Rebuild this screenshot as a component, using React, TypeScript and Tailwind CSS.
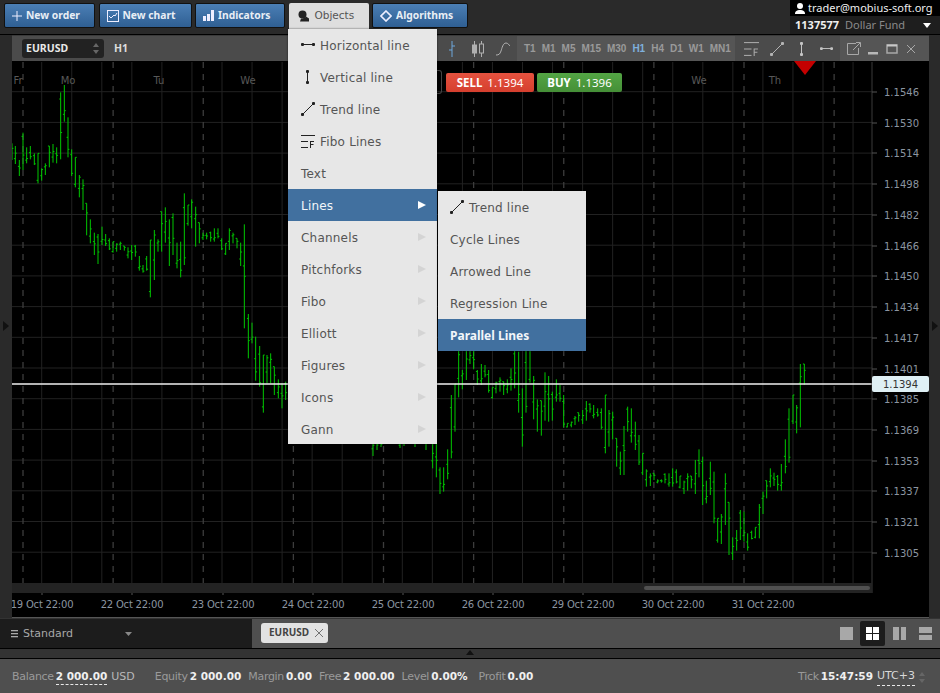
import React from "react";

const blockA: number[][] = [[36,250,300],[46,258,312],[58,300,348],[69,218,330],[80,262,310],[91,258,298],[103,280,315],[114,280,370],[125,325,362],[136,310,345],[148,258,322],[159,252,308],[170,262,310],[182,97,298],[193,75,185],[204,172,292],[215,268,348],[226,292,382],[238,345,412],[249,358,450],[260,430,526],[271,478,550],[283,518,585],[294,522,612],[306,500,555],[317,522,558],[328,535,570],[339,545,578],[350,550,575],[361,545,570],[373,558,572],[384,562,595],[395,555,600],[406,555,590],[418,588,632],[429,615,638],[440,588,632],[451,540,712],[463,510,660],[474,538,575],[485,455,575],[496,442,548],[508,478,618],[519,460,585],[531,548,625],[542,545,652],[553,400,615],[564,435,497],[575,418,505],[587,440,560],[598,488,550],[609,518,540],[620,518,538],[632,515,545],[643,505,545],[654,505,535],[665,535,570],[677,550,585],[688,505,570],[699,518,550],[711,535,565],[722,548,618],[733,493,805],[745,762,895],[756,788,850],[767,830,962],[779,858,980],[790,885,1058],[801,885,970],[812,880,970],[823,920,1005],[835,958,1015],[846,970,1045],[857,965,1020]];
const blockB: number[][] = [[8,310,385],[19,310,412],[30,382,462],[41,382,455],[53,328,418],[64,165,355],[75,132,275],[86,30,172],[97,90,148],[109,30,120],[120,30,72],[131,30,88],[142,90,135],[154,72,135],[165,75,112],[176,90,158],[187,142,176],[198,125,160],[210,112,155],[221,125,165],[232,118,160],[243,85,152],[254,30,145],[266,35,218],[277,145,320],[288,30,218],[300,30,128],[311,108,238],[322,178,275],[334,182,287],[345,97,242],[356,108,245],[367,155,242],[379,118,185],[390,135,185],[401,165,262],[412,250,262],[424,245,262],[435,228,255],[446,218,245],[458,210,252],[469,183,242],[480,190,218],[491,195,235],[503,205,230],[514,205,268],[526,165,340],[537,210,320],[548,215,298],[560,295,380],[571,335,405],[582,258,405],[593,200,275],[604,205,308],[616,245,330],[627,285,375],[638,340,405],[649,388,440],[661,400,438],[672,400,420],[683,418,430],[694,418,428],[705,400,430],[717,400,440],[728,385,440],[739,388,430],[750,408,445],[762,422,462],[773,400,452],[784,408,445],[796,360,462],[807,328,412],[818,350,495],[829,422,490],[841,365,465],[852,395,550],[863,535,608],[874,522,612],[886,400,555],[897,487,645],[908,592,660],[920,570,632],[931,510,600],[942,515,605],[953,580,632],[965,572,598],[976,562,595],[988,492,595],[999,455,522],[1010,422,475],[1021,385,442],[1032,398,438],[1043,405,452],[1054,372,452],[1066,298,400],[1077,205,368],[1089,165,252],[1100,195,280],[1111,72,262],[1123,72,135]];
const hidden: number[][] = [[373,420,456],[377,425,450],[381,420,447],[400,420,448],[404,420,446],[415,420,447],[426,420,450]];

const bars: number[][] = [
  ...blockA.map(([x, t, b]) => [x / 3, 60 + t / 3, 60 + b / 3]),
  ...hidden,
  ...blockB.map(([x, t, b]) => [430 + x / 3, 340 + t / 3, 340 + b / 3]),
];

const priceLabels: [string, number][] = [["1.1546",92],["1.1530",123],["1.1514",153],["1.1498",184],["1.1482",215],["1.1466",246],["1.1450",276],["1.1434",307],["1.1417",338],["1.1401",369],["1.1385",399],["1.1369",430],["1.1353",461],["1.1337",491],["1.1321",522],["1.1305",553]];
const timeLabels: [string, number][] = [["19 Oct 22:00",42],["22 Oct 22:00",132],["23 Oct 22:00",223],["24 Oct 22:00",313],["25 Oct 22:00",403],["26 Oct 22:00",493],["29 Oct 22:00",583],["30 Oct 22:00",673],["31 Oct 22:00",763]];
const dayLabels: [string, number][] = [["Fr",18],["Mo",68],["Tu",159],["We",248],["We",699],["Th",775]];

const Chart = () => {
  const vs = Array.from({ length: 28 }, (_, i) => 41.7 + i * 30.05);
  const hs = Array.from({ length: 16 }, (_, i) => 91.7 + i * 30.7);
  const ds = Array.from({ length: 10 }, (_, i) => 23 + i * 90.125);
  return (
    <svg viewBox="12 61 917 557" className="block w-[917px] h-[557px] bg-black" style={{ fontFamily: "'DejaVu Sans', sans-serif" }}>
      {vs.map((x) => <line key={x} x1={x} x2={x} y1={62} y2={583} stroke="#222222" />)}
      {hs.map((y) => <line key={y} x1={12} x2={872} y1={y} y2={y} stroke="#222222" />)}
      {ds.map((x) => <line key={x} x1={x} x2={x} y1={62} y2={583} stroke="#3c3c3c" strokeWidth={1.3} strokeDasharray="6 6" />)}
      {bars.map(([x, t, b], i) => {
        const h = b - t;
        const o = t + h * (((i * 37) % 10) / 10);
        const c = t + h * (((i * 61 + 3) % 10) / 10);
        return (
          <g key={i} stroke="#00c800" strokeWidth={1}>
            <line x1={x} x2={x} y1={t} y2={b} />
            <line x1={x - 1.4} x2={x} y1={o} y2={o} />
            <line x1={x} x2={x + 1.4} y1={c} y2={c} />
          </g>
        );
      })}
      <line x1={12} x2={872} y1={384} y2={384} stroke="#f0f0f0" strokeWidth={1.4} />
      <line x1={872} x2={872} y1={62} y2={593} stroke="#3a3a3a" />
      <rect x={12} y={583} width={860} height={10} fill="#232323" />
      <rect x={644} y={586} width={226} height={4} rx={2} fill="#505050" />
      {priceLabels.map(([t, y]) => (
        <g key={t}>
          <line x1={872} x2={877} y1={y} y2={y} stroke="#555" />
          <text x={884} y={y + 4} fontSize={10} fill="#8b95a0">{t}</text>
        </g>
      ))}
      {timeLabels.map(([t, x]) => (
        <g key={t}>
          <line x1={x} x2={x} y1={593} y2={595} stroke="#555" />
          <text x={x} y={608} fontSize={10} letterSpacing={-0.22} fill="#8b95a0" textAnchor="middle">{t}</text>
        </g>
      ))}
      {dayLabels.map(([t, x], i) => (
        <text key={i} x={x} y={84} fontSize={10} fill="#585858" textAnchor="middle">{t}</text>
      ))}
      <polygon points="794,61 816,61 805,75" fill="#c40000" />
      <line x1={12} x2={929} y1={617.5} y2={617.5} stroke="#555" />
    </svg>
  );
};

const TopButton = ({ icon, label, w }: { icon: React.ReactNode; label: string; w: string }) => (
  <button className={`${w} h-[25px] flex items-center justify-start pl-[7px] gap-[4px] rounded-[2px] border border-[#111] bg-gradient-to-b from-[#4b7fb5] to-[#2f5f93] font-['Noto_Sans',sans-serif] text-[10.3px] font-bold text-[#e8eef5]`}>
    {icon}
    <span>{label}</span>
  </button>
);

const HLineIcon = () => (
  <svg width="14" height="6" viewBox="0 0 14 6" fill="#222"><rect x="0" y="1" width="3" height="3" rx="1" /><rect x="11" y="1" width="3" height="3" rx="1" /><rect x="2" y="2" width="10" height="1" /></svg>
);
const VLineIcon = () => (
  <svg width="6" height="14" viewBox="0 0 6 14" fill="#222"><rect x="1" y="0" width="3" height="3" rx="1" /><rect x="1" y="11" width="3" height="3" rx="1" /><rect x="2" y="2" width="1" height="10" /></svg>
);
const TrendIcon = ({ c = "#222" }: { c?: string }) => (
  <svg width="14" height="14" viewBox="0 0 14 14" fill={c}><rect x="0" y="11" width="3" height="3" rx="1" /><rect x="11" y="0" width="3" height="3" rx="1" /><line x1="2" y1="12" x2="12" y2="2" stroke={c} /></svg>
);
const FiboIcon = ({ c = "#222" }: { c?: string }) => (
  <svg width="14" height="13" viewBox="0 0 14 13" fill={c}><rect x="0" y="0" width="14" height="1" /><rect x="0" y="6" width="7" height="1" /><rect x="0" y="12" width="7" height="1" /><path d="M9 6h4v1h-3v2h2.5v1H10v3H9z" /></svg>
);
const Caret = ({ active }: { active: boolean }) => (
  <svg width="8" height="8" viewBox="0 0 8 8" className="ml-auto"><polygon points="0,0 8,4 0,8" fill={active ? "#ffffff" : "#d4d4d4"} /></svg>
);

const MenuItem = ({ label, icon, active, caret, iconW = "w-[19px]" }: { label: string; icon?: React.ReactNode; active?: boolean; caret?: boolean; iconW?: string }) => (
  <div className={`h-[32px] flex items-center pl-[13px] pr-[11px] text-[12px] tracking-[0.2px] ${active ? "bg-[#41709f] text-[#f2f6fa]" : "text-[#555555]"}`}>
    {icon && <span className={`${iconW} flex items-center justify-start shrink-0`}>{icon}</span>}
    <span className="pt-[1px]">{label}</span>
    {caret && <Caret active={!!active} />}
  </div>
);

const Tf = ({ t, on }: { t: string; on?: boolean }) => (
  <span className={on ? "text-[#7fb0dc]" : "text-[#9a9a9a]"}>{t}</span>
);

const ToolIcon = ({ children, w = 14, h = 14 }: { children: React.ReactNode; w?: number; h?: number }) => (
  <svg width={w} height={h} viewBox={`0 0 ${w} ${h}`} fill="none" stroke="#a8a8a8">{children}</svg>
);

const Toolbar = () => (
  <div className="h-[26px] flex items-stretch bg-[#4b4b4b] border-t border-[#3a3a3a]">
    <div className="w-[505px] flex items-center pl-[10px]">
      <div className="w-[82px] h-[19px] rounded-[3px] bg-[#222222] flex items-center pl-[4px] pr-[5px] font-['Noto_Sans',sans-serif] text-[10.5px] font-bold text-[#e8e8e8]">
        <span>EURUSD</span>
        <svg width="6" height="11" viewBox="0 0 6 11" className="ml-auto" fill="#666"><polygon points="3,0 6,4 0,4" /><polygon points="0,7 6,7 3,11" /></svg>
      </div>
      <span className="ml-[10px] font-['Noto_Sans',sans-serif] text-[10.5px] font-bold text-[#dddddd]">H1</span>
      <div className="ml-auto flex items-center pr-[7px]">
        <svg width="8" height="16" viewBox="0 0 8 16" stroke="#6fa8dc" fill="none"><path d="M4 0v16M1 9h3M4 5h3" /></svg>
        <svg width="14" height="16" viewBox="0 0 14 16" stroke="#b0b0b0" fill="none" className="ml-[15px]"><path d="M3.5 0v16M10.5 0v16" /><rect x="1.5" y="4" width="4" height="8" fill="#b0b0b0" /><rect x="8.5" y="3" width="4" height="9" fill="#4b4b4b" /></svg>
        <svg width="14" height="14" viewBox="0 0 14 14" stroke="#b0b0b0" fill="none" className="ml-[11px]"><path d="M0 13c3 0 4-1 5-4s2-8 5-8c2 0 3 2 4 3" /></svg>
      </div>
    </div>
    <div className="w-[218px] bg-[#555555] flex items-center pl-[7px] gap-[6px] font-['Liberation_Sans',sans-serif] text-[10px] font-bold">
      {["T1","M1","M5","M15","M30"].map((t) => <Tf key={t} t={t} />)}
      <Tf t="H1" on />
      {["H4","D1","W1","MN1"].map((t) => <Tf key={t} t={t} />)}
    </div>
    <div className="w-[105px] flex items-center pl-[9px] gap-[11px]">
      <svg width="15" height="14" viewBox="0 0 14 13" fill="#a8a8a8"><rect x="0" y="0" width="14" height="1" /><rect x="0" y="6" width="7" height="1" /><rect x="0" y="12" width="7" height="1" /><path d="M9 6h4v1h-3v2h2.5v1H10v3H9z" /></svg>
      <TrendIcon c="#b4b4b4" />
      <span className="flex w-[14px] justify-center"><svg width="6" height="14" viewBox="0 0 6 14" fill="#c4c4c4"><rect x="1" y="0" width="3" height="3" rx="1" /><rect x="1" y="11" width="3" height="3" rx="1" /><rect x="2" y="2" width="1" height="10" /></svg></span>
      <svg width="13" height="6" viewBox="0 0 14 6" fill="#c4c4c4"><rect x="0" y="1" width="3" height="3" rx="1" /><rect x="11" y="1" width="3" height="3" rx="1" /><rect x="2" y="2" width="10" height="1" /></svg>
    </div>
    <div className="flex-1 bg-[#555555] flex items-center pl-[7px] gap-[5px]">
      <ToolIcon><path d="M9 1.5H.5v11h11V6" /><path d="M6 8l7-7M9 .5h4.5V5" /></ToolIcon>
      <ToolIcon><rect x="2" y="10" width="10" height="2.5" fill="#b8b8b8" stroke="none" /></ToolIcon>
      <ToolIcon><rect x="2" y="3" width="10" height="8" strokeWidth="1.5" /><rect x="2" y="2.5" width="10" height="2" fill="#c8c8c8" stroke="none" /></ToolIcon>
      <ToolIcon><path d="M3 3l8 8M11 3l-8 8" /></ToolIcon>
    </div>
  </div>
);

const Gutter = () => (
  <div className="w-[12px] shrink-0 bg-[#2a2a2a] flex items-center justify-center">
    <svg width="6" height="10" viewBox="0 0 6 10" className="mt-[-2px]"><polygon points="0,0 6,5 0,10" fill="#111" /></svg>
  </div>
);

const Stat = ({ label, value, dashed, ml }: { label: string; value: string; dashed?: boolean; ml: string }) => (
  <span className={`${ml} flex items-center gap-[2px] whitespace-nowrap`}>
    <span className="text-[#9a9a9a] tracking-[-0.3px]">{label}</span>
    <span className={`font-bold text-[#f0f0f0] text-[10.5px] ${dashed ? "border-b border-dashed border-[#e8e8e8]" : ""}`}>{value}</span>
  </span>
);

export default function App() {
  return (
    <div className="relative w-[940px] h-[693px] overflow-hidden flex flex-col bg-[#2b2b2b] font-['DejaVu_Sans',sans-serif]">
      {/* Top bar */}
      <div className="h-[35px] shrink-0 flex bg-[#2a2a2a] border-b border-black">
        <div className="flex items-start pt-[3px] pl-[4px] gap-[3.5px]">
          <TopButton w="w-[91px]" label="New order" icon={<svg width="10" height="10" viewBox="0 0 10 10" stroke="#eef" fill="none"><path d="M5 0v10M0 5h10" /></svg>} />
          <TopButton w="w-[93px]" label="New chart" icon={<svg width="12" height="12" viewBox="0 0 12 12" stroke="#eef" fill="none"><rect x=".5" y=".5" width="11" height="11" /><path d="M2 6l2 2 3-3 1 1 2-3" /></svg>} />
          <TopButton w="w-[90px]" label="Indicators" icon={<svg width="11" height="11" viewBox="0 0 11 11" fill="#eef"><rect x="0" y="6" width="3" height="5" /><rect x="4" y="4" width="3" height="7" /><rect x="8" y="0" width="3" height="11" /></svg>} />
          <div className="w-[80px] h-[26px] flex items-center pl-[9px] gap-[5px] rounded-t-[2px] bg-[#dedede] text-[10.5px] text-[#555555]">
            <svg width="12" height="12" viewBox="0 0 12 12" fill="#222"><circle cx="4.5" cy="4.5" r="4" /><path d="M3 8.5c2 0 4-.5 5-2l3 2v3H2z" /></svg>
            <span>Objects</span>
          </div>
          <TopButton w="w-[96px]" label="Algorithms" icon={<svg width="12" height="12" viewBox="0 0 12 12" stroke="#eef" strokeWidth="1.6" fill="none"><path d="M6 1l5 5-5 5-5-5z" /></svg>} />
        </div>
        <div className="ml-auto w-[150px] h-[34px] bg-black flex flex-col">
          <div className="h-[16px] flex items-center pl-[5px] gap-[3px] font-['Noto_Sans',sans-serif] text-[11px] text-[#eeeeee] whitespace-nowrap">
            <svg width="10" height="11" viewBox="0 0 10 11" fill="#fff"><circle cx="5" cy="3" r="3" /><path d="M0 11c0-3 2-4 5-4s5 1 5 4z" /></svg>
            <span>trader@mobius-soft.org</span>
          </div>
          <div className="flex-1 bg-[#1e1e1e] flex items-center pl-[5px] font-['Noto_Sans',sans-serif] text-[11px] whitespace-nowrap">
            <span className="font-bold text-[#eeeeee]">1137577</span>
            <span className="ml-[6px] text-[#8a8a8a]">Dollar Fund</span>
            <svg width="8" height="5" viewBox="0 0 8 5" className="ml-auto mr-[9px]"><polygon points="0,0 8,0 4,5" fill="#fff" /></svg>
          </div>
        </div>
      </div>

      {/* Main */}
      <div className="h-[583px] shrink-0 flex">
        <Gutter />
        <div className="w-[917px] shrink-0 flex flex-col">
          <Toolbar />
          <Chart />
        </div>
        <div className="flex-1 bg-[#2a2a2a] flex items-center justify-center">
          <svg width="6" height="10" viewBox="0 0 6 10" className="mt-[-2px]"><polygon points="0,0 6,5 0,10" fill="#111" /></svg>
        </div>
      </div>

      {/* Tabs */}
      <div className="h-[30px] shrink-0 flex border-t border-[#333]">
        <div className="w-[252px] bg-[#1c1c1c] flex items-center pl-[11px] text-[11px] text-[#a8a8a8]">
          <svg width="8" height="8" viewBox="0 0 8 8" fill="#aaa"><rect y="0" width="7" height="1.3" /><rect y="3" width="7" height="1.3" /><rect y="6" width="7" height="1.3" /></svg>
          <span className="ml-[4px] pt-[1px]">Standard</span>
          <svg width="7" height="4" viewBox="0 0 7 4" className="ml-[52px]"><polygon points="0,0 7,0 3.5,4" fill="#888" /></svg>
        </div>
        <div className="flex-1 bg-[#4f4f4f] flex items-center pl-[9px]">
          <div className="w-[67px] h-[20px] mb-[2px] rounded-[3px] bg-[#e2e2e2] flex items-center pl-[8px] gap-[6px] font-['Noto_Sans',sans-serif] text-[10px] font-bold text-[#444]">
            <span>EURUSD</span>
            <svg width="8" height="8" viewBox="0 0 8 8" stroke="#555" strokeWidth="0.8" fill="none"><path d="M0 0l8 8M8 0L0 8" /></svg>
          </div>
          <div className="ml-auto mr-[8px] flex items-center">
            <div className="w-[13px] h-[13px] bg-[#a8a8a8]" />
            <div className="ml-[7px] w-[25px] h-[25px] rounded-[2px] bg-[#1c1c1c] grid grid-cols-2 gap-[1px] p-[6px]">
              <span className="bg-white" /><span className="bg-white" /><span className="bg-white" /><span className="bg-white" />
            </div>
            <div className="ml-[8px] w-[13px] h-[13px] grid grid-cols-2 gap-[2px]"><span className="bg-[#a8a8a8]" /><span className="bg-[#a8a8a8]" /></div>
            <div className="ml-[13px] w-[13px] h-[13px] grid grid-rows-2 gap-[2px]"><span className="bg-[#a8a8a8]" /><span className="bg-[#a8a8a8]" /></div>
          </div>
        </div>
      </div>

      {/* Strip */}
      <div className="h-[11px] shrink-0 bg-[#333333] border-y border-black flex justify-center">
        <svg width="8" height="5" viewBox="0 0 8 5" className="mt-[1px]"><polygon points="4,0 8,5 0,5" fill="#111" /></svg>
      </div>

      {/* Status */}
      <div className="flex-1 bg-[#4f4f4f] flex items-center pl-[12px] pt-[2px] text-[11px]">
        <Stat ml="" label="Balance" value="2 000.00" dashed />
        <span className="ml-[4px] text-[#b8b8b8]">USD</span>
        <Stat ml="ml-[20px]" label="Equity" value="2 000.00" />
        <Stat ml="ml-[7px]" label="Margin" value="0.00" />
        <Stat ml="ml-[7px]" label="Free" value="2 000.00" />
        <Stat ml="ml-[7px]" label="Level" value="0.00%" />
        <Stat ml="ml-[11px]" label="Profit" value="0.00" />
        <span className="ml-auto text-[#9a9a9a] tracking-[-0.3px]">Tick</span>
        <span className="ml-[2px] font-bold text-[#f0f0f0] text-[10.5px]">15:47:59</span>
        <span className="ml-[4px] text-[#d8d8d8] border-b border-dashed border-[#e8e8e8]">UTC+3</span>
        <svg width="6" height="11" viewBox="0 0 6 11" className="ml-[4px] mr-[15px]" fill="#666"><polygon points="3,0 6,4 0,4" /><polygon points="0,7 6,7 3,11" /></svg>
      </div>

      {/* Sell / buy overlay */}
      <div className="absolute left-[437px] top-[70px] w-[5px] h-[24px] rounded-r-[3px] border border-l-0 border-[#444]" />
      <div className="absolute left-[446px] top-[73px] flex gap-[3px] font-['Noto_Sans',sans-serif] text-[11.5px] text-white">
        <div className="w-[88px] h-[19px] rounded-[2px] bg-gradient-to-b from-[#e5523f] to-[#d53f2e] flex items-center justify-center gap-[5px]">
          <span className="font-bold">SELL</span><span>1.1394</span>
        </div>
        <div className="w-[85px] h-[19px] rounded-[2px] bg-gradient-to-b from-[#53a544] to-[#458f37] flex items-center justify-center gap-[5px]">
          <span className="font-bold">BUY</span><span>1.1396</span>
        </div>
      </div>

      {/* Current price label */}
      <div className="absolute left-[872px] top-[376px] w-[57px] h-[16px] rounded-[2px] bg-[#dff0f5] flex items-center justify-center text-[10px] text-[#333]">1.1394</div>

      {/* Objects menu */}
      <div className="absolute left-[288px] top-[29px] w-[149px] h-[415px] overflow-hidden bg-[#e7e7e7] shadow-[0_0_2px_rgba(0,0,0,0.6)]">
        <MenuItem label="Horizontal line" icon={<HLineIcon />} />
        <MenuItem label="Vertical line" icon={<span className="pl-[4px] flex"><VLineIcon /></span>} />
        <MenuItem label="Trend line" icon={<TrendIcon />} />
        <MenuItem label="Fibo Lines" icon={<FiboIcon />} />
        <MenuItem label="Text" />
        <MenuItem label="Lines" active caret />
        {["Channels","Pitchforks","Fibo","Elliott","Figures","Icons","Gann"].map((l) => <MenuItem key={l} label={l} caret />)}
      </div>

      {/* Lines submenu */}
      <div className="absolute left-[438px] top-[191px] w-[148px] bg-[#e7e7e7] shadow-[0_0_2px_rgba(0,0,0,0.6)]">
        <div className="h-[32px] flex items-center pl-[12px] text-[12px] tracking-[0.2px] text-[#555555]"><span className="w-[19px]"><TrendIcon /></span><span className="pt-[1px]">Trend line</span></div>
        <div className="h-[32px] flex items-center pl-[12px] pt-[1px] text-[12px] tracking-[0.2px] text-[#555555]">Cycle Lines</div>
        <div className="h-[32px] flex items-center pl-[12px] pt-[1px] text-[12px] tracking-[0.2px] text-[#555555]">Arrowed Line</div>
        <div className="h-[32px] flex items-center pl-[12px] pt-[1px] text-[12px] tracking-[0.2px] text-[#555555]">Regression Line</div>
        <div className="h-[32px] flex items-center pl-[12px] pt-[1px] font-['Noto_Sans',sans-serif] text-[12px] font-bold text-[#f2f6fa] bg-[#41709f]">Parallel Lines</div>
      </div>
    </div>
  );
}
